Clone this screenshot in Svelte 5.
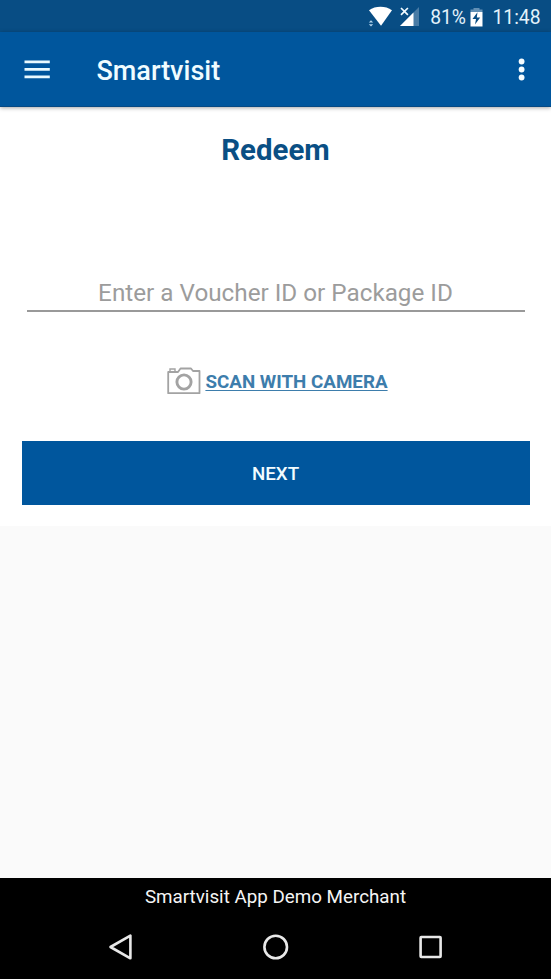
<script>
  let code = $state('');
</script>

<div class="screen">
  <div class="status">
    <svg class="wifi" width="25" height="22" viewBox="0 0 25 22">
      <path d="M1 4.2C7.5-.4 17.5-.4 24 4.2L13 19.7Z" fill="#fff" />
      <path d="M.8 16.6 3 14.2 5.2 16.6ZM.8 18.2H5.2L3 20.6Z" fill="#b4d5ed" />
    </svg>
    <svg class="signal" width="20" height="20" viewBox="0 0 20 20">
      <path d="M19 0V19H0Z" fill="#487ba5" />
      <path d="M13.5 5.5V19H0Z" fill="#fff" />
      <path d="M0 0H9V8H0Z" fill="#084d84" />
      <path d="M1 1 7.9 7.9M7.9 1 1 7.9" stroke="#f0faff" stroke-width="1.7" />
    </svg>
    <span class="percent">81%</span>
    <svg class="battery" width="13" height="19" viewBox="0 0 13 19">
      <path d="M3.5 0H9.5V1.5H12.5V4H.5V1.5H3.5Z" fill="#6290b5" />
      <path d="M.5 4H12.5V18.5H.5Z" fill="#fff" />
      <path d="M7.5 4.3 2.5 11H6L5 16.5 10.2 9.6H6.8Z" fill="#084d84" />
    </svg>
    <span class="time">11:48</span>
  </div>

  <header>
    <button class="plain menu" aria-label="Menu">
      <svg width="26" height="20" viewBox="0 0 26 20"><path d="M.5 2.9H25.8M.5 10.4H25.8M.5 17.8H25.8" stroke="#e9faff" stroke-width="2.7" /></svg>
    </button>
    <h1>Smartvisit</h1>
    <button class="plain more" aria-label="More options">
      <svg width="8" height="24" viewBox="0 0 8 24" fill="#f5fcff"><circle cx="3.6" cy="4.5" r="2.9" /><circle cx="3.6" cy="12.5" r="2.9" /><circle cx="3.6" cy="20.5" r="2.9" /></svg>
    </button>
  </header>

  <main>
    <h2>Redeem</h2>
    <input bind:value={code} placeholder="Enter a Voucher ID or Package ID" />
    <div class="scan">
      <svg width="34" height="28" viewBox="0 0 34 28" fill="none" stroke="#a3a3a3">
        <path d="M1.2 5H11L13.5 1.5H24L26 4H32.5V26.2H1.2Z" stroke-width="1.8" stroke-linejoin="round" />
        <path d="M3 4.5V2H8V4.5" stroke-width="1.4" />
        <circle cx="17" cy="15" r="7.1" stroke-width="2.9" />
      </svg>
      <span>SCAN WITH CAMERA</span>
    </div>
    <button class="next">NEXT</button>
  </main>

  <footer>
    <p>Smartvisit App Demo Merchant</p>
    <nav>
      <svg width="26" height="28" viewBox="0 0 26 28"><path d="M22.4 2.6V25.3L2.5 14Z" fill="none" stroke="#e8e8e8" stroke-width="2.6" stroke-linejoin="round" /></svg>
      <svg width="26" height="28" viewBox="0 0 26 28"><circle cx="12.7" cy="14" r="11.3" fill="none" stroke="#e8e8e8" stroke-width="2.6" /></svg>
      <svg width="26" height="28" viewBox="0 0 26 28"><rect x="2.6" y="4" width="20" height="20" rx=".7" fill="none" stroke="#e8e8e8" stroke-width="2.6" /></svg>
    </nav>
  </footer>
</div>

<style>
  .screen {
    width: 551px;
    height: 979px;
    display: flex;
    flex-direction: column;
    overflow: hidden;
    background: #fafafa;
    font-family: Roboto, sans-serif;
  }
  .status {
    flex: none;
    box-sizing: border-box;
    height: 32px;
    padding: 2px 10.5px 0 0;
    display: flex;
    align-items: center;
    justify-content: flex-end;
    background: #084d84;
    color: #e3f2fb;
    font-size: 19.3px;
  }
  .wifi { margin-right: 7px; }
  .signal { margin-right: 10px; }
  .percent { margin-right: 4.5px; }
  .battery { margin-right: 9px; }
  header {
    flex: none;
    box-sizing: border-box;
    height: 75px;
    padding: 0 25px 0 24px;
    display: flex;
    align-items: center;
    background: #00569d;
    border-bottom: 1px solid #064983;
    box-shadow: 0 1px 4px #00000059;
    z-index: 1;
  }
  .plain {
    display: flex;
    padding: 0;
    border: 0;
    background: none;
  }
  h1 {
    margin: 3px auto 0 46.5px;
    color: #f0fcff;
    font-size: 27px;
    font-weight: 500;
    line-height: 36px;
  }
  main {
    flex: none;
    box-sizing: border-box;
    height: 419px;
    padding: 25px 21.5px 0;
    display: flex;
    flex-direction: column;
    background: #fff;
  }
  h2 {
    margin: 0;
    color: #0a4f84;
    font-size: 29.4px;
    font-weight: 700;
    line-height: 36px;
    text-align: center;
  }
  input {
    box-sizing: border-box;
    height: 40px;
    margin: 104px 5px 0;
    padding: 4px 0 0;
    border: 0;
    border-bottom: 2px solid #999;
    border-radius: 0;
    outline: 0;
    background: none;
    color: #333;
    font: 400 24.25px Roboto, sans-serif;
    text-align: center;
  }
  input::placeholder { color: #9c9c9c; opacity: 1; }
  .scan {
    height: 28px;
    margin-top: 55px;
    padding-left: 4px;
    display: flex;
    align-items: center;
    justify-content: center;
    gap: 4px;
    color: #3d7dac;
    font-size: 18.8px;
    font-weight: 700;
  }
  .scan span {
    padding-top: 2px;
    text-decoration: underline;
    text-decoration-thickness: 1px;
    text-underline-offset: 2px;
  }
  .next {
    height: 64px;
    margin-top: 46px;
    padding: 1px 0 0;
    border: 0;
    background: #00569d;
    color: #f2fcff;
    font: 500 18.8px Roboto, sans-serif;
  }
  footer {
    flex: none;
    height: 101px;
    margin-top: auto;
    background: #000;
  }
  p {
    margin: 0;
    padding-top: 7px;
    color: #f5f5f5;
    font-size: 18.8px;
    line-height: 24px;
    text-align: center;
  }
  nav {
    display: flex;
    justify-content: center;
    gap: 129px;
    padding-top: 24px;
  }
</style>
